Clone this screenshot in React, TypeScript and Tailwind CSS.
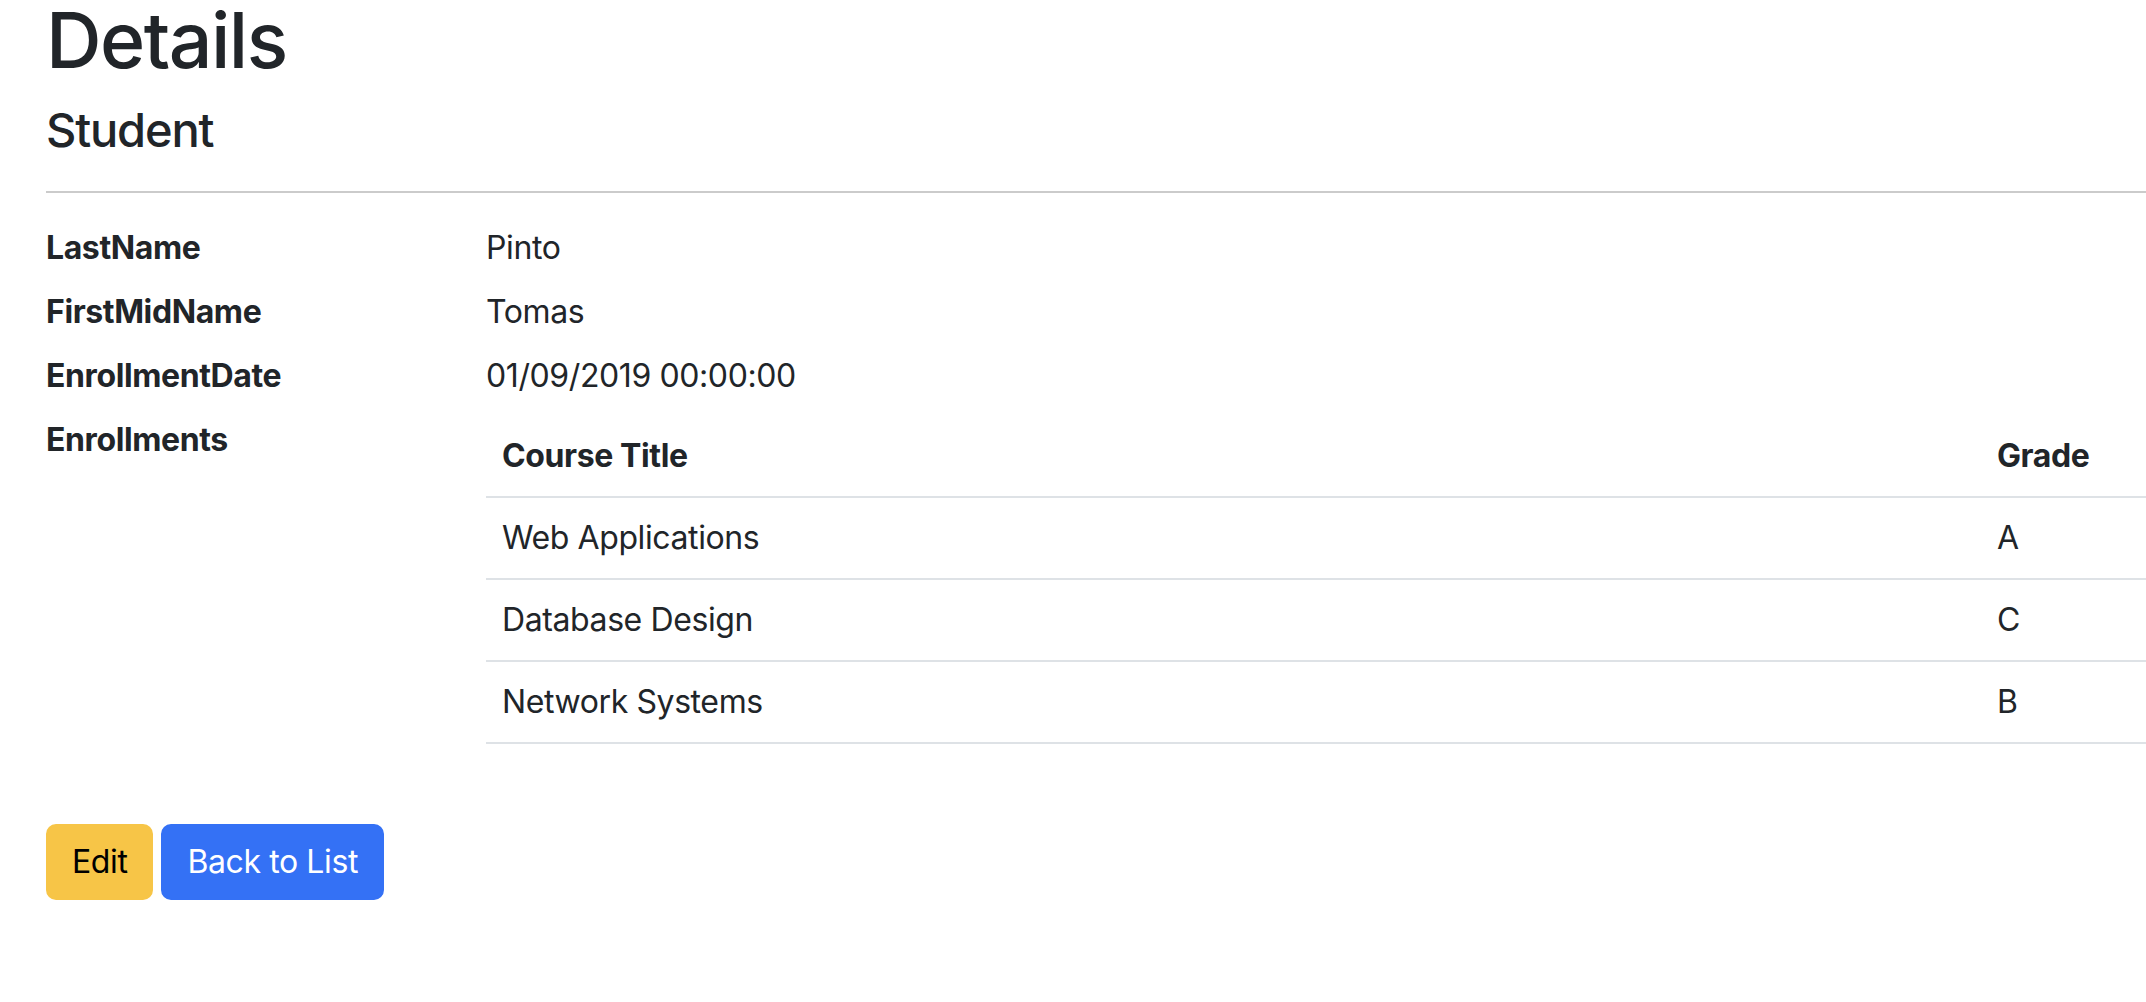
import React from 'react'

const FONT = "font-['Inter','Noto_Sans',sans-serif]"

const fields = [
  { label: 'LastName', value: 'Pinto' },
  { label: 'FirstMidName', value: 'Tomas' },
  { label: 'EnrollmentDate', value: '01/09/2019 00:00:00' },
]

const enrollments = [
  { title: 'Web Applications', grade: 'A' },
  { title: 'Database Design', grade: 'C' },
  { title: 'Network Systems', grade: 'B' },
]

export default function App() {
  return (
    <div className={`w-full min-h-screen overflow-hidden bg-white pl-[46px] text-[#212529] tracking-[-0.025em] ${FONT}`}>
      {/* Header */}
      <h1 className="text-[77px] leading-[80px] font-medium tracking-[-0.02em]">Details</h1>
      <h4 className="mt-[21px] text-[47px] leading-[58px] font-medium tracking-[-0.025em]">Student</h4>
      <div className="mt-[32px] h-[2px] bg-[#cbcbcb]" />

      {/* Fields */}
      <dl className="mt-[31px] grid grid-cols-[440px_1fr] text-[32px] leading-[48px]">
        {fields.map((f) => (
          <React.Fragment key={f.label}>
            <dt className="font-bold">{f.label}</dt>
            <dd className="mb-4">{f.value}</dd>
          </React.Fragment>
        ))}
        <dt className="font-bold">Enrollments</dt>
        <dd className="mb-4">
          <table className="w-full border-collapse mb-8">
            <thead>
              <tr>
                <th className="w-[1495px] px-4 py-4 text-left font-bold border-b-2 border-[#dee2e6]">Course Title</th>
                <th className="px-4 py-4 text-left font-bold border-b-2 border-[#dee2e6]">Grade</th>
              </tr>
            </thead>
            <tbody>
              {enrollments.map((e) => (
                <tr key={e.title}>
                  <td className="px-4 py-4 border-b-2 border-[#dee2e6]">{e.title}</td>
                  <td className="px-4 py-4 border-b-2 border-[#dee2e6]">{e.grade}</td>
                </tr>
              ))}
            </tbody>
          </table>
        </dd>
      </dl>

      {/* Actions */}
      <div className="mt-[32px] flex gap-2 text-[32px] leading-[48px]">
        <button className="px-6 py-3 border-2 border-[#f7c547] bg-[#f7c547] text-black rounded-[10px]">Edit</button>
        <button className="px-6 py-3 border-2 border-[#3471f5] bg-[#3471f5] text-white rounded-[10px]">Back to List</button>
      </div>
    </div>
  )
}
